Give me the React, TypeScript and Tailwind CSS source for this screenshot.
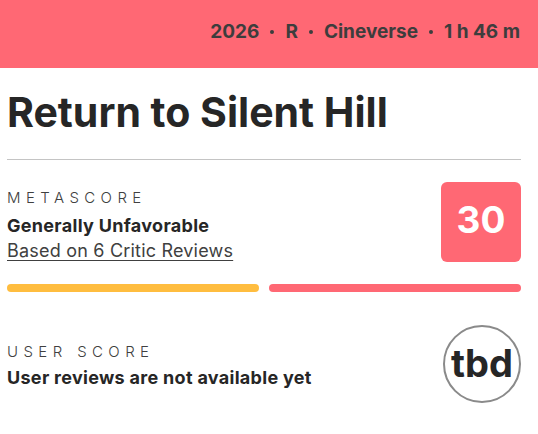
const Dot = () => <span className="mx-[11px] inline-block h-[4px] w-[4px] rounded-full bg-[#3d3d3d]" />;

export default function App() {
  return (
    <div className="min-h-screen bg-white font-['Inter',sans-serif] text-[#262626]">
      <header className="flex h-[68px] items-start justify-end bg-[#ff6874] pr-[18px] pt-[18px]">
        <div className="flex items-center text-[19px] font-bold leading-[28px] text-[#3d3d3d]">
          <span>2026</span>
          <Dot />
          <span>R</span>
          <Dot />
          <span>Cineverse</span>
          <Dot />
          <span>1 h 46 m</span>
        </div>
      </header>

      <div className="pl-[7px] pr-[17px]">
        <h1 className="mt-[20px] text-[41px] font-bold leading-[48px]">Return to Silent Hill</h1>
        <div className="mt-[23px] h-px bg-[#c4c4c4]" />

        <div className="mt-[22px] flex items-start justify-between">
          <div className="pt-[6px]">
            <div className="text-[15px] font-light leading-[20px] tracking-[0.36em] text-[#404040]">METASCORE</div>
            <div className="mt-[6px] text-[18px] font-bold leading-[24px] tracking-[0.3px]">Generally Unfavorable</div>
            <a className="mt-[1px] block text-[18px] leading-[24px] tracking-[0.2px] text-[#404040] underline underline-offset-[3px]">
              Based on 6 Critic Reviews
            </a>
          </div>
          <div className="flex h-[80px] w-[80px] items-center justify-center rounded-[6px] bg-[#ff6874] pb-[4px] text-[37px] font-bold text-white">
            30
          </div>
        </div>

        <div className="mt-[21px] flex gap-[10px]">
          <div className="h-[8px] flex-1 rounded-full bg-[#ffbd3f]" />
          <div className="h-[8px] flex-1 rounded-full bg-[#ff6874]" />
        </div>

        <div className="mt-[33px] flex items-center justify-between">
          <div className="pt-[3px]">
            <div className="text-[15px] font-light leading-[20px] tracking-[0.36em] text-[#404040]">USER SCORE</div>
            <div className="mt-[4px] text-[18px] font-bold leading-[24px] tracking-[0.3px]">User reviews are not available yet</div>
          </div>
          <div className="flex h-[78px] w-[78px] items-center justify-center rounded-full border-2 border-[#8a8a8a] pb-[2px] text-[38px] font-bold">
            tbd
          </div>
        </div>
      </div>
    </div>
  );
}
